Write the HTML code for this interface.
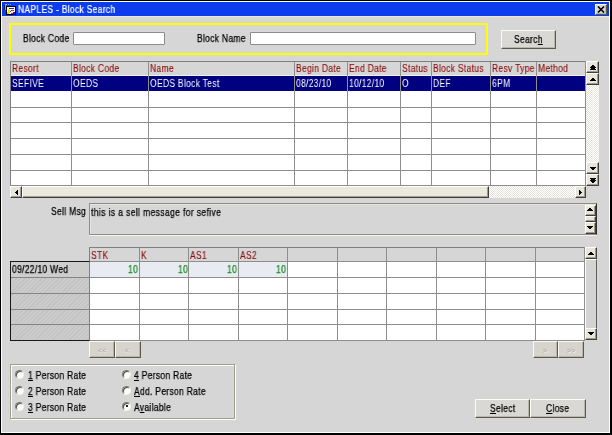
<!DOCTYPE html>
<html><head><meta charset="utf-8">
<style>
*{margin:0;padding:0;box-sizing:border-box}
html,body{width:612px;height:435px;overflow:hidden;background:#000}
body{position:relative;font-family:"Liberation Sans",sans-serif;font-size:10px;color:#000}
.t{will-change:transform;-webkit-text-stroke:0.25px currentColor;transform:scaleX(0.85);transform-origin:0 0;letter-spacing:0.35px}
.a{position:absolute}
#win{left:0;top:0;width:612px;height:435px;background:#d6d6d6;border-top:1px solid #000;border-left:1px solid #000;border-right:2px solid #000;border-bottom:2px solid #000}
#inner{left:1px;top:1px;width:609px;height:432px;border:1px solid #fff}
#title{left:2px;top:2px;width:607px;height:14px;background:#0c3cee}
#titleline{left:2px;top:16px;width:607px;height:1px;background:#efe8d8}
.t{position:absolute;white-space:nowrap;line-height:10px}
.btn{position:absolute;background:#d9d8d4;border-top:1px solid #fbfbf4;border-left:1px solid #fbfbf4;border-right:1px solid #5c5a4c;border-bottom:1px solid #5c5a4c;box-shadow:inset -1px -1px 0 #b8b6aa}
.inp{position:absolute;background:#fff;border:1px solid #8c8c8c;border-radius:1px}
.gl{position:absolute;background:#8e8e8e}
.hd{color:#8a0e0e;-webkit-text-stroke:0.12px currentColor!important}
.w{color:#fff;-webkit-text-stroke:0!important}
.sb{position:absolute;background:#e8e5da;border-top:1px solid #fff;border-left:1px solid #fff;border-right:1px solid #404040;border-bottom:1px solid #404040;box-shadow:inset -1px -1px 0 #a09c90}
.trk{position:absolute;background-color:#e6e4dc;background-image:conic-gradient(#ffffff 25%,#e6e4dc 0 50%,#ffffff 0 75%,#e6e4dc 0);background-size:2px 2px}
.radio{position:absolute;width:9px;height:9px;border-radius:50%;background:#fbfbf8;border:1px solid;border-color:#7c7a70 #f4f2ea #f4f2ea #7c7a70;box-shadow:inset 1px 1px 0 #505048}
u{text-decoration:underline;text-decoration-thickness:1px;text-underline-offset:1px}
</style></head><body>
<div id="win" class="a"></div>
<div id="inner" class="a"></div>
<div id="title" class="a"></div>
<div id="titleline" class="a"></div>
<!-- icon -->
<svg class="a" style="left:2px;top:2px" width="16" height="14" viewBox="0 0 16 14" shape-rendering="crispEdges">
<rect x="4" y="4" width="10" height="9" fill="#000"/>
<rect x="5" y="5" width="8" height="7" fill="#f4f4f4"/>
<rect x="6" y="7" width="1" height="5" fill="#ffe000"/>
<rect x="7" y="8" width="1" height="3" fill="#ffe000"/>
<rect x="5" y="10" width="1" height="2" fill="#e0d000"/>
<rect x="7" y="6" width="2" height="1" fill="#2030a0"/>
<rect x="9" y="6" width="3" height="1" fill="#1030e0"/>
<rect x="9" y="8" width="3" height="1" fill="#d02020"/>
<rect x="9" y="11" width="2" height="1" fill="#c02020"/>
<rect x="8" y="9" width="1" height="1" fill="#2030a0"/>
<rect x="11" y="10" width="2" height="3" fill="#1020c0"/>
<rect x="3" y="2" width="1" height="6" fill="#60c060"/>
<rect x="2" y="3" width="1" height="5" fill="#102060"/>
<rect x="4" y="2" width="1" height="1" fill="#c0c0d0"/>
<rect x="6" y="2" width="1" height="1" fill="#a0a8d0"/>
<rect x="8" y="2" width="1" height="1" fill="#8090d0"/>
</svg>
<div class="t" style="left:18px;top:5px;color:#fff;-webkit-text-stroke:0.2px #fff">NAPLES - Block Search</div>
<!-- close btn -->
<div class="btn" style="left:595px;top:4px;width:12px;height:11px;background:#d8d6ce"></div>
<svg class="a" style="left:597px;top:6px" width="8" height="7" viewBox="0 0 8 7"><path d="M1 0.5 L7 6.5 M7 0.5 L1 6.5" stroke="#000" stroke-width="1.6"/></svg>

<!-- search area -->
<div class="a" style="left:9px;top:23px;width:479px;height:32px;border:2px solid #ffff00"></div>
<div class="t" style="left:23px;top:34px">Block Code</div>
<div class="inp" style="left:73px;top:32px;width:92px;height:13px"></div>
<div class="t" style="left:197px;top:34px">Block Name</div>
<div class="inp" style="left:250px;top:32px;width:226px;height:13px"></div>
<div class="btn" style="left:501px;top:30px;width:55px;height:19px"></div>
<div class="t" style="left:514px;top:35px">Searc<u>h</u></div>

<!-- main grid -->
<div class="a" style="left:10px;top:61px;width:576px;height:126px;background:#fff;border:1px solid #808080;border-right:none"></div>
<div class="a" style="left:11px;top:62px;width:575px;height:13px;background:#d6d6d6"></div>
<div class="a" style="left:11px;top:75px;width:575px;height:1px;background:#f0f0f0"></div>
<div class="a" style="left:11px;top:76px;width:575px;height:15px;background:#000080"></div>
<div class="gl" style="left:11px;top:107px;width:575px;height:1px"></div>
<div class="gl" style="left:11px;top:122px;width:575px;height:1px"></div>
<div class="gl" style="left:11px;top:138px;width:575px;height:1px"></div>
<div class="gl" style="left:11px;top:154px;width:575px;height:1px"></div>
<div class="gl" style="left:11px;top:170px;width:575px;height:1px"></div>
<div class="gl" style="left:10px;top:185px;width:576px;height:1px"></div>
<div class="gl" style="left:71px;top:62px;width:1px;height:124px"></div>
<div class="gl" style="left:148px;top:62px;width:1px;height:124px"></div>
<div class="gl" style="left:294px;top:62px;width:1px;height:124px"></div>
<div class="gl" style="left:347px;top:62px;width:1px;height:124px"></div>
<div class="gl" style="left:400px;top:62px;width:1px;height:124px"></div>
<div class="gl" style="left:431px;top:62px;width:1px;height:124px"></div>
<div class="gl" style="left:490px;top:62px;width:1px;height:124px"></div>
<div class="gl" style="left:536px;top:62px;width:1px;height:124px"></div>
<div class="gl" style="left:585px;top:61px;width:1px;height:125px"></div>
<div class="t hd" style="left:12px;top:64px">Resort</div>
<div class="t hd" style="left:73px;top:64px">Block Code</div>
<div class="t hd" style="left:150px;top:64px">Name</div>
<div class="t hd" style="left:296px;top:64px">Begin Date</div>
<div class="t hd" style="left:349px;top:64px">End Date</div>
<div class="t hd" style="left:402px;top:64px">Status</div>
<div class="t hd" style="left:433px;top:64px">Block Status</div>
<div class="t hd" style="left:492px;top:64px">Resv Type</div>
<div class="t hd" style="left:538px;top:64px">Method</div>
<div class="t w" style="left:12px;top:79px">SEFIVE</div>
<div class="t w" style="left:73px;top:79px">OEDS</div>
<div class="t w" style="left:150px;top:79px">OEDS Block Test</div>
<div class="t w" style="left:296px;top:79px">08/23/10</div>
<div class="t w" style="left:349px;top:79px">10/12/10</div>
<div class="t w" style="left:402px;top:79px">O</div>
<div class="t w" style="left:433px;top:79px">DEF</div>
<div class="t w" style="left:492px;top:79px">6PM</div>
<!-- h scrollbar -->
<div class="trk" style="left:10px;top:186px;width:576px;height:12px"></div>
<div class="sb" style="left:10px;top:186px;width:12px;height:12px"></div>
<div class="sb" style="left:22px;top:186px;width:467px;height:12px;background:#ebe8dc"></div>
<div class="sb" style="left:575px;top:186px;width:11px;height:12px"></div>
<svg class="a" style="left:10px;top:186px" width="12" height="12" shape-rendering="crispEdges"><g fill="#000"><rect x="5" y="6" width="1" height="1"/><rect x="6" y="5" width="1" height="3"/><rect x="7" y="4" width="1" height="5"/></g></svg>
<svg class="a" style="left:575px;top:186px" width="11" height="12" shape-rendering="crispEdges"><g fill="#000"><rect x="4" y="4" width="1" height="5"/><rect x="5" y="5" width="1" height="3"/><rect x="6" y="6" width="1" height="1"/></g></svg>
<!-- v scrollbar -->
<div class="trk" style="left:586px;top:61px;width:13px;height:125px"></div>
<div class="sb" style="left:586px;top:61px;width:13px;height:12px"></div>
<div class="sb" style="left:586px;top:73px;width:13px;height:12px"></div>
<div class="sb" style="left:586px;top:162px;width:13px;height:12px"></div>
<div class="sb" style="left:586px;top:174px;width:13px;height:12px"></div>
<svg class="a" style="left:586px;top:61px" width="13" height="12" shape-rendering="crispEdges"><g fill="#000"><rect x="6" y="4" width="2" height="1"/><rect x="5" y="5" width="4" height="1"/><rect x="4" y="6" width="6" height="1"/><rect x="5" y="7" width="4" height="1"/><rect x="4" y="8" width="6" height="1"/></g></svg>
<svg class="a" style="left:586px;top:73px" width="13" height="12" shape-rendering="crispEdges"><g fill="#000"><rect x="6" y="5" width="2" height="1"/><rect x="5" y="6" width="4" height="1"/><rect x="4" y="7" width="6" height="1"/></g></svg>
<svg class="a" style="left:586px;top:162px" width="13" height="12" shape-rendering="crispEdges"><g fill="#000"><rect x="4" y="5" width="6" height="1"/><rect x="5" y="6" width="4" height="1"/><rect x="6" y="7" width="2" height="1"/></g></svg>
<svg class="a" style="left:586px;top:174px" width="13" height="12" shape-rendering="crispEdges"><g fill="#000"><rect x="4" y="4" width="6" height="1"/><rect x="5" y="5" width="4" height="1"/><rect x="4" y="6" width="6" height="1"/><rect x="5" y="7" width="4" height="1"/><rect x="6" y="8" width="2" height="1"/></g></svg>

<!-- sell msg -->
<div class="t" style="left:51px;top:207px">Sell Msg</div>
<div class="a" style="left:89px;top:203px;width:508px;height:32px;background:#d6d6d6;border:1px solid #8e8c84;border-right-color:#303030;box-shadow:0 1px 0 #f4f4f0, inset 1px 1px 0 #e4e4e0"></div>
<div class="t" style="left:91px;top:208px;letter-spacing:0.45px">this is a sell message for sefive</div>
<div class="sb" style="left:585px;top:205px;width:11px;height:11px"></div>
<div class="sb" style="left:585px;top:216px;width:11px;height:6px"></div>
<div class="sb" style="left:585px;top:222px;width:11px;height:12px"></div>
<svg class="a" style="left:585px;top:205px" width="11" height="10" shape-rendering="crispEdges"><g fill="#000"><rect x="4" y="3" width="2" height="1"/><rect x="3" y="4" width="4" height="1"/><rect x="2" y="5" width="6" height="1"/></g></svg>
<svg class="a" style="left:585px;top:222px" width="11" height="12" shape-rendering="crispEdges"><g fill="#000"><rect x="2" y="4" width="6" height="1"/><rect x="3" y="5" width="4" height="1"/><rect x="4" y="6" width="2" height="1"/></g></svg>

<!-- rate grid -->
<div class="a" style="left:89px;top:247px;width:496px;height:94px;background:#fff;border-top:1px solid #808080;border-left:1px solid #808080"></div>
<div class="a" style="left:90px;top:248px;width:495px;height:13px;background:#d6d6d6"></div>
<div class="a" style="left:90px;top:262px;width:197px;height:15px;background:#e8ecf2"></div>
<div class="gl" style="left:89px;top:261px;width:496px;height:1px"></div>
<div class="gl" style="left:89px;top:277px;width:496px;height:1px"></div>
<div class="gl" style="left:89px;top:293px;width:496px;height:1px"></div>
<div class="gl" style="left:89px;top:309px;width:496px;height:1px"></div>
<div class="gl" style="left:89px;top:324px;width:496px;height:1px"></div>
<div class="gl" style="left:89px;top:340px;width:496px;height:1px"></div>
<div class="gl" style="left:139px;top:248px;width:1px;height:93px"></div>
<div class="gl" style="left:188px;top:248px;width:1px;height:93px"></div>
<div class="gl" style="left:238px;top:248px;width:1px;height:93px"></div>
<div class="gl" style="left:287px;top:248px;width:1px;height:93px"></div>
<div class="gl" style="left:337px;top:248px;width:1px;height:93px"></div>
<div class="gl" style="left:386px;top:248px;width:1px;height:93px"></div>
<div class="gl" style="left:436px;top:248px;width:1px;height:93px"></div>
<div class="gl" style="left:485px;top:248px;width:1px;height:93px"></div>
<div class="gl" style="left:535px;top:248px;width:1px;height:93px"></div>
<div class="gl" style="left:584px;top:247px;width:1px;height:94px"></div>
<div class="t hd" style="left:91px;top:251px">STK</div>
<div class="t hd" style="left:141px;top:251px">K</div>
<div class="t hd" style="left:190px;top:251px">AS1</div>
<div class="t hd" style="left:240px;top:251px">AS2</div>
<div class="t" style="left:128px;top:265px;color:#1a8a1a">10</div>
<div class="t" style="left:178px;top:265px;color:#1a8a1a">10</div>
<div class="t" style="left:227px;top:265px;color:#1a8a1a">10</div>
<div class="t" style="left:276px;top:265px;color:#1a8a1a">10</div>
<!-- date col -->
<div class="a" style="left:10px;top:261px;width:80px;height:80px;background:#c5c5c5;background-image:repeating-linear-gradient(135deg,#c2c2c2 0 1px,#cbcbcb 1px 3px);border:1px solid #181818;border-right-color:#808080"></div>
<div class="a" style="left:11px;top:262px;width:78px;height:15px;background:#cdcdcd"></div>
<div class="gl" style="left:11px;top:277px;width:78px;height:1px;background:#858585"></div>
<div class="gl" style="left:11px;top:293px;width:78px;height:1px;background:#858585"></div>
<div class="gl" style="left:11px;top:309px;width:78px;height:1px;background:#858585"></div>
<div class="gl" style="left:11px;top:324px;width:78px;height:1px;background:#858585"></div>
<div class="t" style="left:12px;top:265px">09/22/10 Wed</div>
<!-- rate scrollbar -->
<div class="sb" style="left:585px;top:259px;width:12px;height:69px;background:#d4d4d2;box-shadow:none;border-bottom:none;border-right:1px solid #606060"></div>
<div class="sb" style="left:585px;top:247px;width:12px;height:12px"></div>
<div class="sb" style="left:585px;top:328px;width:12px;height:12px"></div>
<svg class="a" style="left:585px;top:247px" width="12" height="12" shape-rendering="crispEdges"><g fill="#000"><rect x="5" y="5" width="2" height="1"/><rect x="4" y="6" width="4" height="1"/><rect x="3" y="7" width="6" height="1"/></g></svg>
<svg class="a" style="left:585px;top:328px" width="12" height="12" shape-rendering="crispEdges"><g fill="#000"><rect x="3" y="4" width="6" height="1"/><rect x="4" y="5" width="4" height="1"/><rect x="5" y="6" width="2" height="1"/></g></svg>
<!-- nav buttons -->
<div class="btn" style="left:89px;top:341px;width:26px;height:17px;background:#d6d4cc"></div>
<div class="btn" style="left:115px;top:341px;width:26px;height:17px;background:#d6d4cc"></div>
<div class="btn" style="left:533px;top:341px;width:25px;height:17px;background:#d6d4cc"></div>
<div class="btn" style="left:558px;top:341px;width:26px;height:17px;background:#d6d4cc"></div>
<div class="t" style="left:98px;top:346px;color:#b0b0b0;text-shadow:1px 1px 0 #f8f8f8;font-size:8px">&lt;&lt;</div>
<div class="t" style="left:125px;top:346px;color:#b0b0b0;text-shadow:1px 1px 0 #f8f8f8;font-size:8px">&lt;</div>
<div class="t" style="left:543px;top:346px;color:#b0b0b0;text-shadow:1px 1px 0 #f8f8f8;font-size:8px">&gt;</div>
<div class="t" style="left:567px;top:346px;color:#b0b0b0;text-shadow:1px 1px 0 #f8f8f8;font-size:8px">&gt;&gt;</div>

<!-- group box -->
<div class="a" style="left:10px;top:364px;width:225px;height:55px;border:1px solid #a29e8c;box-shadow:1px 1px 0 #fff, inset 1px 1px 0 #fff"></div>
<div class="radio" style="left:15px;top:370px"></div>
<div class="radio" style="left:15px;top:386px"></div>
<div class="radio" style="left:15px;top:402px"></div>
<div class="radio" style="left:122px;top:370px"></div>
<div class="radio" style="left:122px;top:386px"></div>
<div class="radio" style="left:122px;top:402px"></div>
<div class="a" style="left:126px;top:405px;width:2px;height:2px;background:#202030"></div>
<div class="t" style="left:28px;top:371px"><u>1</u> Person Rate</div>
<div class="t" style="left:28px;top:387px"><u>2</u> Person Rate</div>
<div class="t" style="left:28px;top:403px"><u>3</u> Person Rate</div>
<div class="t" style="left:134px;top:371px"><u>4</u> Person Rate</div>
<div class="t" style="left:134px;top:387px"><u>A</u>dd. Person Rate</div>
<div class="t" style="left:134px;top:403px">A<u>v</u>ailable</div>

<!-- select/close -->
<div class="btn" style="left:475px;top:399px;width:55px;height:19px"></div>
<div class="btn" style="left:530px;top:399px;width:56px;height:19px"></div>
<div class="t" style="left:490px;top:404px"><u>S</u>elect</div>
<div class="t" style="left:546px;top:404px"><u>C</u>lose</div>
</body></html>
